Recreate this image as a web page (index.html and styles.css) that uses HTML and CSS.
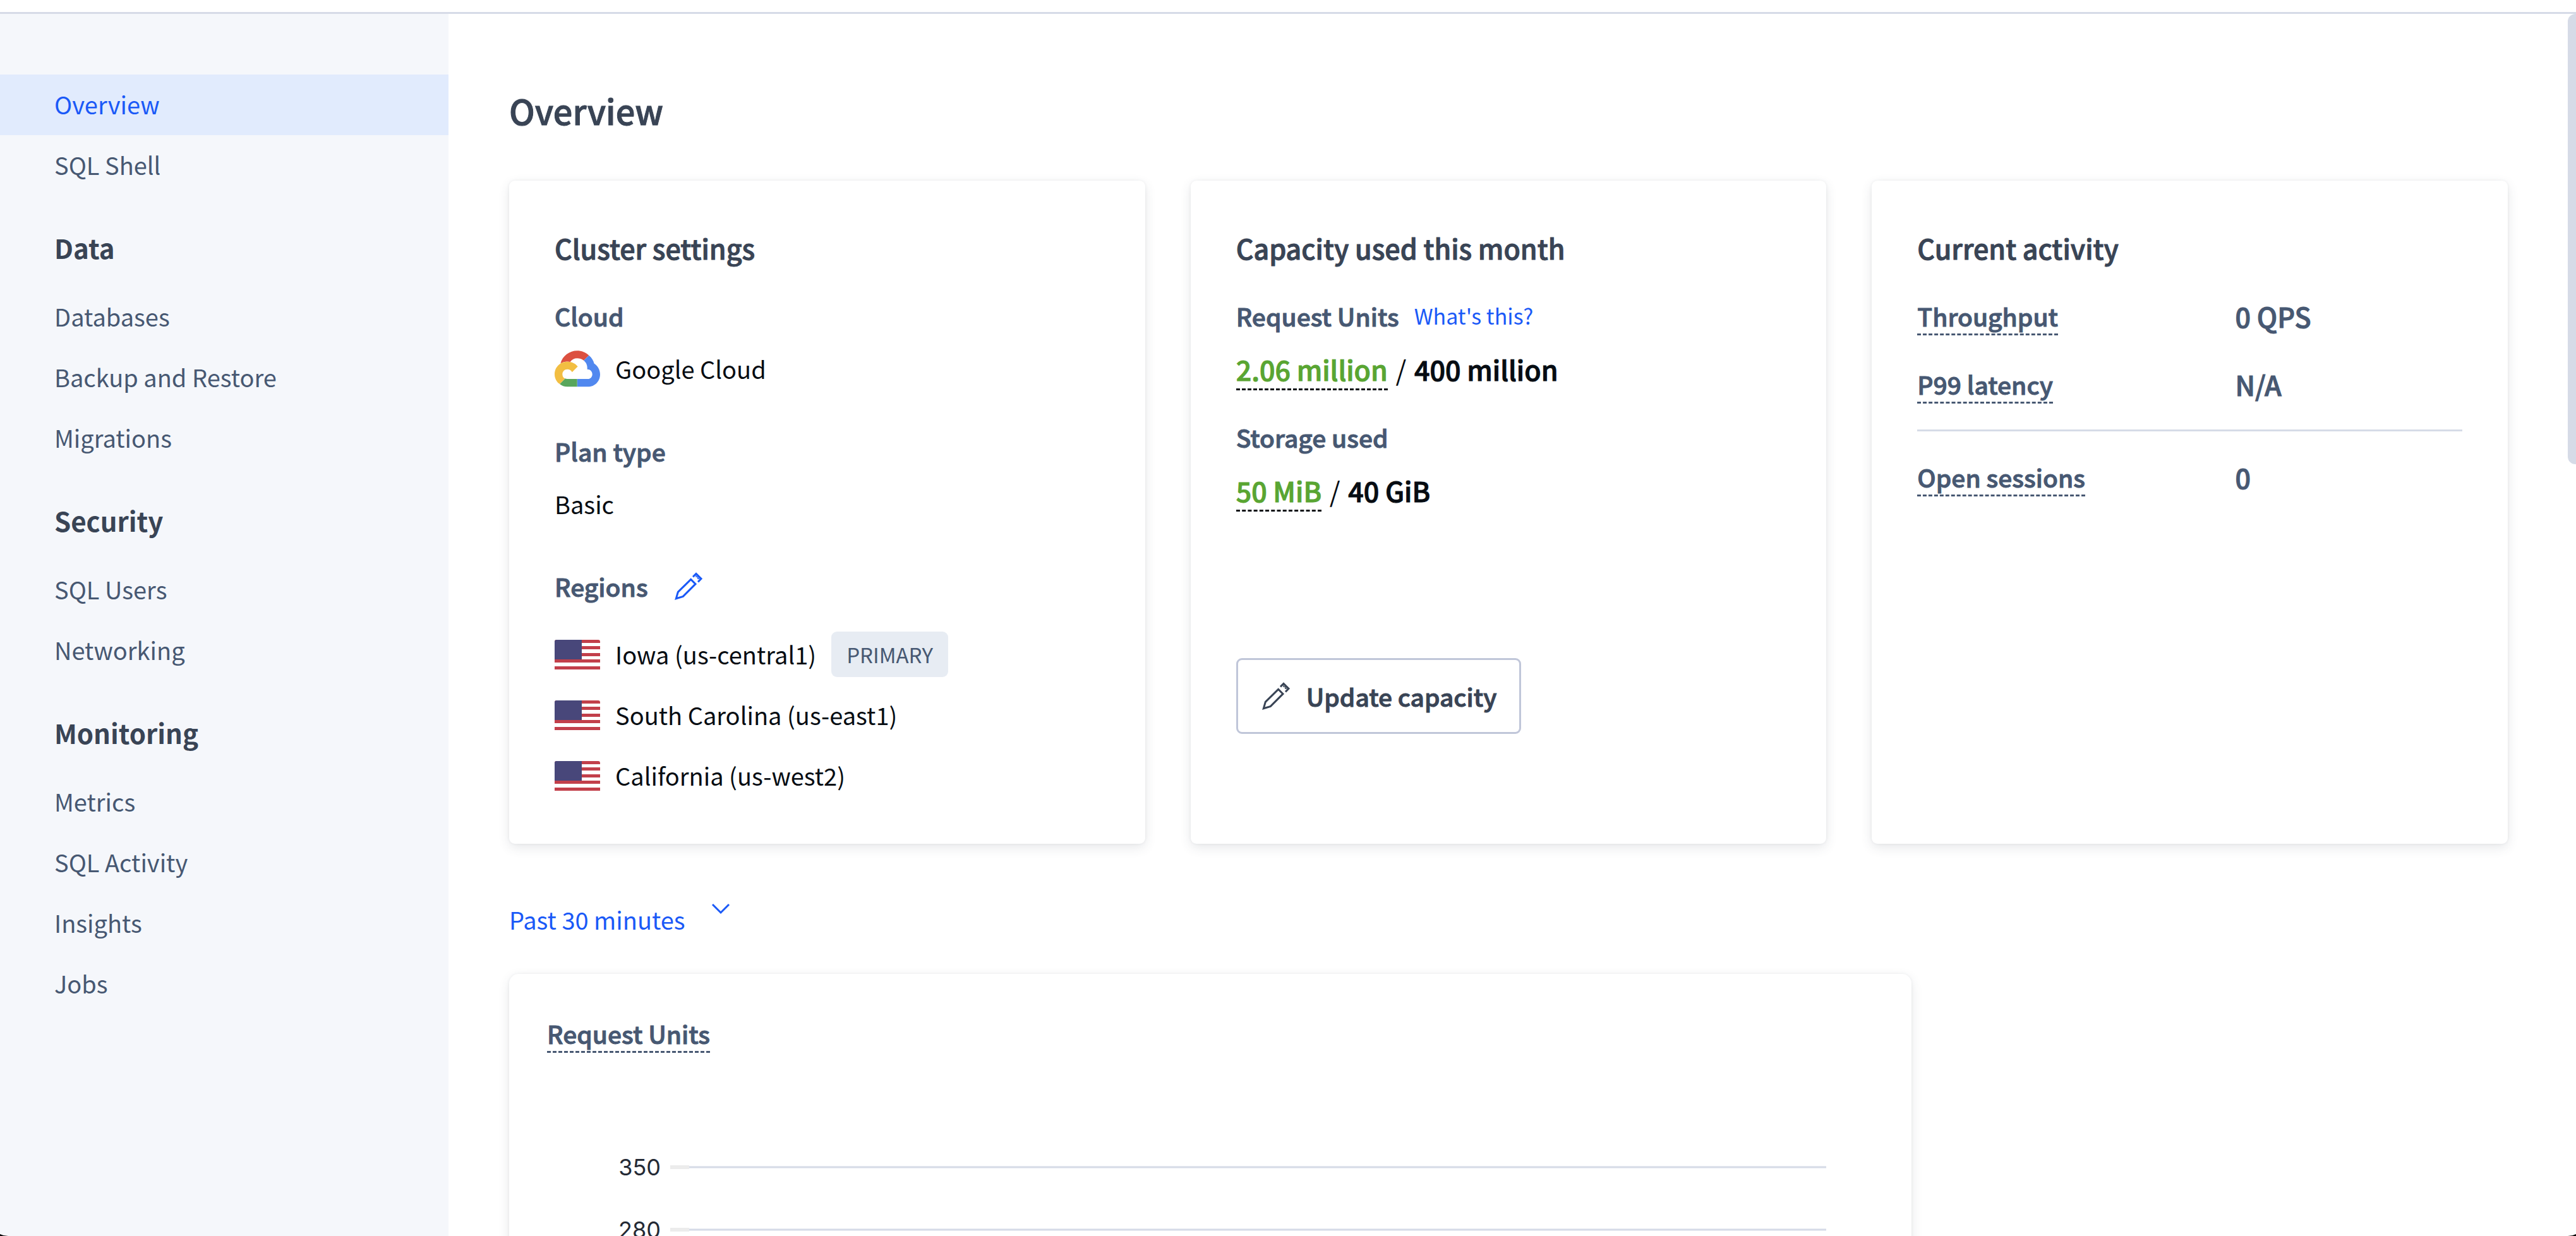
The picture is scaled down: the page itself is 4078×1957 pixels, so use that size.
FILE: index.html
```html
<!DOCTYPE html>
<html lang="en">
<head>
<meta charset="utf-8">
<title>Overview</title>
<link rel="stylesheet" href="styles.css">
</head>
<body>
<svg class="defs" aria-hidden="true">
  <symbol id="pencil" viewBox="48 50 144 144">
    <path d="M131 90 L153 112 L94 171 L61 181 L70 150 Z M141 78 L156 63 L180 87 L165 102" fill="none" stroke="currentColor" stroke-width="9"/>
    <path d="M156 70 V78 H164 V86 H172" fill="none" stroke="currentColor" stroke-width="4"/>
  </symbol>
  <symbol id="flag-us" viewBox="0 0 72 47">
    <path fill="#fff" d="M0 0h72v47H0z"/>
    <path fill="#c23f4a" d="M3 0h66a3 3 0 0 1 3 3v2H0V3a3 3 0 0 1 3-3zM0 10h72v5H0zM0 21h72v5H0zM0 31h72v5H0zM0 42h72v5H0z"/>
    <path fill="#48477a" d="M3 0h40v31H0V3a3 3 0 0 1 3-3z"/>
  </symbol>
</svg>
<div class="app">
  <nav class="sidebar">
    <a class="nav-item active" href="#">Overview</a>
    <a class="nav-item" href="#">SQL Shell</a>
    <h2 class="nav-heading">Data</h2>
    <a class="nav-item" href="#">Databases</a>
    <a class="nav-item" href="#">Backup and Restore</a>
    <a class="nav-item" href="#">Migrations</a>
    <h2 class="nav-heading">Security</h2>
    <a class="nav-item" href="#">SQL Users</a>
    <a class="nav-item" href="#">Networking</a>
    <h2 class="nav-heading">Monitoring</h2>
    <a class="nav-item" href="#">Metrics</a>
    <a class="nav-item" href="#">SQL Activity</a>
    <a class="nav-item" href="#">Insights</a>
    <a class="nav-item" href="#">Jobs</a>
  </nav>
  <main class="content">
    <h1 class="page-title">Overview</h1>
    <div class="cards">
      <section class="card">
        <h2 class="card-title">Cluster settings</h2>
        <div class="group">
          <h3 class="label">Cloud</h3>
          <div class="row">
            <svg class="cloud" viewBox="24 37 216 174" aria-hidden="true">
              <path fill="#dc5040" d="M52 98C62 62 95 38 131 38C152 38 172 46 187 60L162 84C152 77 142 74 131 74C117 74 106 80 98 91C82 87 66 90 52 98Z"/>
              <path fill="#5188ef" d="M187 60C200 70 208 84 212 99C228 108 240 128 240 150C240 183 215 209 182 209H131V172H182C194 172 203 162 203 150C203 136 193 126 179 126C180 108 176 95 162 84Z"/>
              <path fill="#58a65c" d="M131 209V172H84C80 172 77 171 74 170L48 196C58 204 70 209 84 209Z"/>
              <path fill="#f2be42" d="M84 90C50 90 24 116 24 150C24 168 33 186 48 196L74 170C66 167 61 160 61 150C61 136 71 126 84 126C95 126 104 132 107 140L134 113C123 98 105 90 84 90Z"/>
            </svg>
            <span>Google Cloud</span>
          </div>
        </div>
        <div class="group">
          <h3 class="label">Plan type</h3>
          <div class="row">Basic</div>
        </div>
        <div class="group">
          <div class="label-row">
            <h3 class="label">Regions</h3>
            <button class="icon-button" type="button" aria-label="Edit regions"><svg class="icon"><use href="#pencil"/></svg></button>
          </div>
          <ul class="regions">
            <li class="row"><svg class="flag"><use href="#flag-us"/></svg><span>Iowa (us-central1)</span><span class="badge">PRIMARY</span></li>
            <li class="row"><svg class="flag"><use href="#flag-us"/></svg><span>South Carolina (us-east1)</span></li>
            <li class="row"><svg class="flag"><use href="#flag-us"/></svg><span>California (us-west2)</span></li>
          </ul>
        </div>
      </section>
      <section class="card">
        <h2 class="card-title">Capacity used this month</h2>
        <div class="usage">
          <div class="row"><h3 class="label">Request Units</h3><a class="help" href="#">What's this?</a></div>
          <p class="amount"><span class="used">2.06 million</span> <span class="slash">/</span> <strong>400 million</strong></p>
        </div>
        <div class="usage">
          <h3 class="label">Storage used</h3>
          <p class="amount"><span class="used">50 MiB</span> <span class="slash">/</span> <strong>40 GiB</strong></p>
        </div>
        <button class="update" type="button"><svg class="icon"><use href="#pencil"/></svg>Update capacity</button>
      </section>
      <section class="card">
        <h2 class="card-title">Current activity</h2>
        <dl class="activity">
          <dt class="label"><span class="hint">Throughput</span></dt><dd>0 QPS</dd>
          <dt class="label"><span class="hint">P99 latency</span></dt><dd>N/A</dd>
        </dl>
        <hr class="divider">
        <dl class="activity">
          <dt class="label"><span class="hint">Open sessions</span></dt><dd>0</dd>
        </dl>
      </section>
    </div>
    <button class="range" type="button">Past 30 minutes
      <svg class="chevron" viewBox="0 0 40 40" aria-hidden="true"><path d="M7 12l13 13 13-13" fill="none" stroke="currentColor" stroke-width="3"/></svg>
    </button>
    <section class="card chart">
      <h2 class="label"><span class="hint">Request Units</span></h2>
      <div class="axis">
        <div class="grid-row"><span class="tick-label">350</span><span class="tick"></span><span class="grid-line"></span></div>
        <div class="grid-row"><span class="tick-label">280</span><span class="tick"></span><span class="grid-line"></span></div>
      </div>
    </section>
  </main>
</div>
<div class="scroll-thumb"></div>
<div class="corner corner-left"></div>
<div class="corner corner-right"></div>
</body>
</html>
```
FILE: styles.css
```css
* { box-sizing: border-box; }
body {
  margin: 0;
  height: 100vh;
  overflow: hidden;
  position: relative;
  display: flex;
  flex-direction: column;
  padding-top: 19px;
  background: #fff;
  color: #060c12;
  font: 400 38px/72px "Noto Sans CJK SC", "Noto Sans", sans-serif;
}
h1, h2, h3, p, ul, dl, dd { margin: 0; padding: 0; font-size: inherit; }
ul { list-style: none; }
a { text-decoration: none; }
button { font: inherit; background: none; border: 0; padding: 0; cursor: pointer; }
svg { display: block; flex: none; }
.defs { position: absolute; width: 0; height: 0; }

.app {
  flex: 1;
  min-height: 0;
  display: flex;
  border-top: 3px solid #d6dbe7;
}
.sidebar {
  flex: none;
  width: 710px;
  padding-top: 96px;
  background: #f5f7fb;
}
.nav-item {
  display: block;
  padding: 11px 86px 13px;
  color: #475872;
}
.nav-item.active { background: #e1ebfd; color: #1a59f7; }
.nav-heading {
  padding: 46px 86px 26px;
  font-size: 42px;
  font-weight: 700;
  color: #394455;
}

.content {
  flex: 1;
  min-width: 0;
  overflow: hidden;
  padding: 117px 108px 0 96px;
}
/* Semibold: the medium weight with a slightly thicker stem. */
.page-title, .card-title, .label, .amount strong, .used, .update, .activity dd {
  font-weight: 500;
  -webkit-text-stroke: 1px currentColor;
}
.page-title {
  font-size: 54px;
  color: #394455;
}
.cards {
  display: grid;
  grid-template-columns: repeat(3, minmax(0, 1fr));
  gap: 72px;
  margin-top: 75px;
}
.card {
  padding: 70px 72px 72px;
  border-radius: 9px;
  background: #fff;
  box-shadow: 0 6px 18px rgba(57, 68, 85, .12), 0 0 4px rgba(57, 68, 85, .08);
}
.card-title {
  margin-bottom: 36px;
  font-size: 43px;
  color: #394455;
}
.label {
  font-size: 39px;
  color: #475872;
}
.row { display: flex; align-items: center; gap: 24px; }
.group { display: grid; gap: 12px; }
.group + .group { margin-top: 58px; }
.cloud { width: 72px; height: 58px; }
.flag { width: 72px; height: 47px; }
.label-row { display: flex; align-items: center; gap: 40px; }
.icon { width: 48px; height: 48px; }
.icon-button { color: #1a59f7; }
.regions { display: grid; gap: 24px; margin-top: 24px; }
.badge {
  padding: 0 24px;
  border-radius: 9px;
  background: #e7ecf3;
  font-size: 33px;
  color: #475872;
}

.usage { display: grid; gap: 12px; }
.usage + .usage { margin-top: 36px; }
.help { font-size: 34px; color: #1a59f7; }
.amount { font-size: 43px; }
.slash { margin: 0 3px; }
.used {
  border-bottom: 3px dashed #060c12;
  color: #59a532;
}
.update {
  display: flex;
  align-items: center;
  gap: 24px;
  margin-top: 230px;
  padding: 21px 36px;
  border: 3px solid #c0c6d9;
  border-radius: 9px;
  font-size: 39px;
  color: #394455;
}

.activity {
  display: grid;
  grid-template-columns: 7fr 5fr;
  row-gap: 36px;
}
.activity dd {
  font-size: 43px;
  color: #475872;
}
.hint { border-bottom: 3px dashed #475872; }
.divider {
  height: 3px;
  margin: 36px 0;
  border: 0;
  background: #d6dbe7;
}

.range {
  display: flex;
  align-items: flex-start;
  gap: 36px;
  margin-top: 84px;
  color: #1a59f7;
}
.chevron { width: 40px; height: 40px; }

.chart {
  max-width: 2220px;
  margin-top: 50px;
  padding: 58px 60px 300px;
  border-radius: 15px;
}
.axis {
  display: grid;
  gap: 63px;
  margin-top: 158px;
  padding-right: 75px;
}
.grid-row { display: flex; align-items: center; }
.tick-label {
  width: 180px;
  margin-right: 15px;
  font: 36px/36px Inter, sans-serif;
  text-align: right;
  color: #242a35;
}
.tick { width: 30px; height: 6px; background: #ececec; }
.grid-line {
  flex: 1;
  height: 4px;
  border: solid #e8ebf2;
  border-width: 1px 0;
  background: #d6dbe7;
}

.scroll-thumb {
  position: absolute;
  top: 22px;
  right: 0;
  width: 13px;
  height: 713px;
  border-radius: 12px 0 0 12px;
  background: #d6dbe7;
}
.corner {
  position: absolute;
  bottom: 0;
  width: 13px;
  height: 3px;
  background: #000;
}
.corner-left { left: 0; clip-path: polygon(0 0, 40% 66%, 100% 100%, 0 100%); }
.corner-right { right: 0; clip-path: polygon(100% 0, 60% 66%, 0 100%, 100% 100%); }
```
